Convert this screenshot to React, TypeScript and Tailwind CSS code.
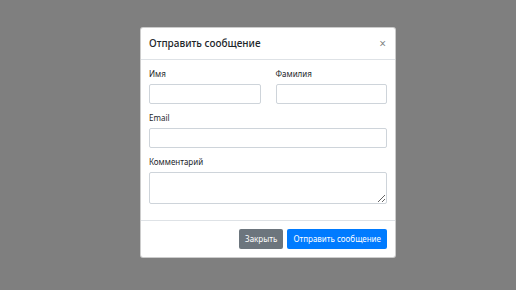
export default function App() {
  return (
    <div
      className="w-[516px] h-[290px] bg-[#7f7f7f] pl-[140px] pt-[27px] text-[#212529]"
      style={{ fontFamily: '"Noto Sans", "Open Sans", sans-serif' }}
    >
      <div className="w-[256px] bg-white rounded-[3px] border border-black/20 flex flex-col">
        {/* Header */}
        <div className="flex items-start justify-between px-[8px] py-[8px] border-b border-[#dee2e6]">
          <h5 className="text-[10px] leading-[15px] font-medium">Отправить сообщение</h5>
          <button className="text-[12px] leading-[15px] font-normal text-black/50 mr-[1px]">×</button>
        </div>

        {/* Body */}
        <div className="p-[8px]">
          <div className="grid grid-cols-2 gap-x-[15px]">
            <div className="mb-[8px]">
              <label className="block text-[8px] leading-[12px] mb-[4px]">Имя</label>
              <input className="block w-full h-[20px] border border-[#ced4da] rounded-[2px]" />
            </div>
            <div className="mb-[8px]">
              <label className="block text-[8px] leading-[12px] mb-[4px]">Фамилия</label>
              <input className="block w-full h-[20px] border border-[#ced4da] rounded-[2px]" />
            </div>
          </div>
          <div className="mb-[8px]">
            <label className="block text-[8px] leading-[12px] mb-[4px]">Email</label>
            <input className="block w-full h-[20px] border border-[#ced4da] rounded-[2px]" />
          </div>
          <div className="mb-[8px]">
            <label className="block text-[8px] leading-[12px] mb-[4px]">Комментарий</label>
            <textarea className="block w-full h-[32px] border border-[#ced4da] rounded-[2px]" />
          </div>
        </div>

        {/* Footer */}
        <div className="flex justify-end gap-[4px] p-[8px] border-t border-[#dee2e6]">
          <button className="h-[20px] px-[6px] text-[8px] leading-[12px] text-white bg-[#6c757d] rounded-[2px]">
            Закрыть
          </button>
          <button className="h-[20px] px-[6px] text-[8px] leading-[12px] text-white bg-[#007bff] rounded-[2px]">
            Отправить сообщение
          </button>
        </div>
      </div>
    </div>
  )
}
